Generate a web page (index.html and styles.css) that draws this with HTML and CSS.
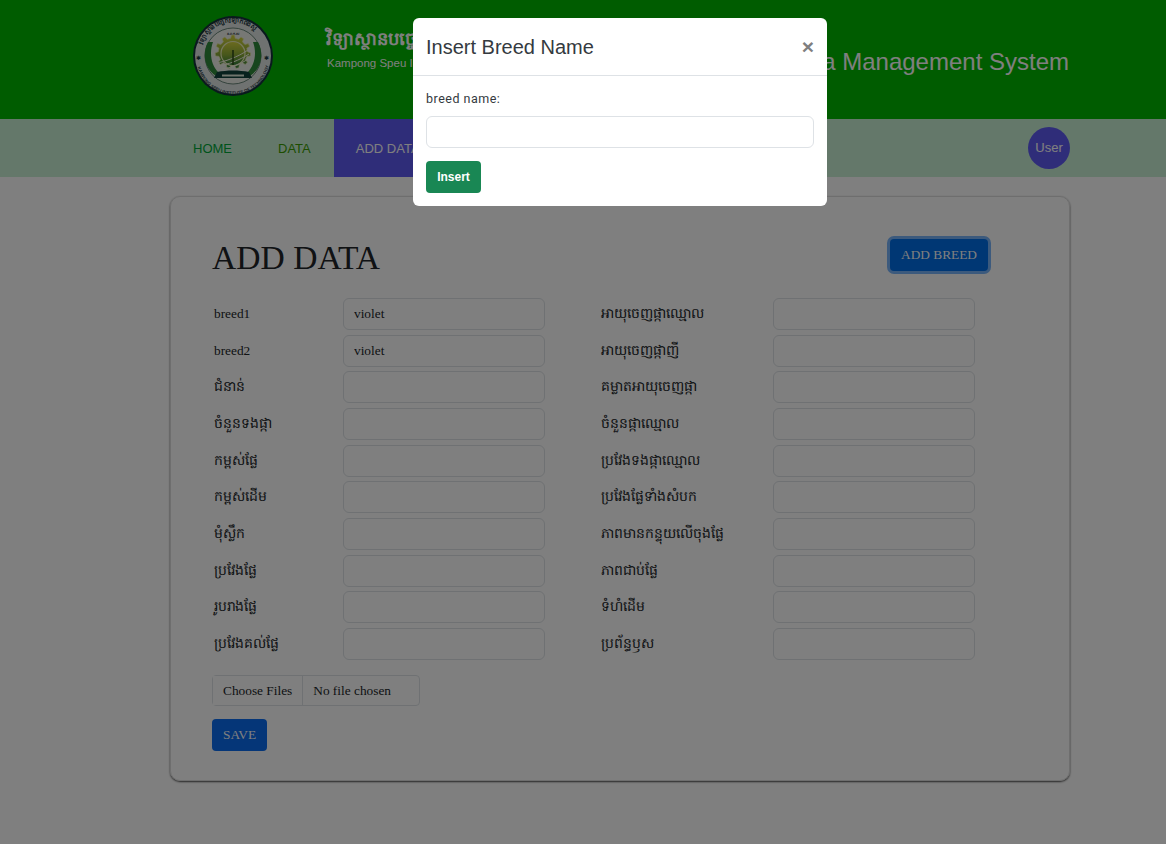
FILE: index.html
```html
<!DOCTYPE html>
<html lang="en">
<head>
<meta charset="utf-8">
<title>Add Data</title>
<link rel="stylesheet" href="styles.css">
</head>
<body>
<header class="brand">
  <div class="wrap brand-row">
    <svg class="logo" viewBox="0 0 80 80" width="80" height="80">
      <defs>
        <linearGradient id="disc" x1="0" y1="0" x2="0" y2="1"><stop offset="0" stop-color="#d8d63e"/><stop offset=".55" stop-color="#8fae38"/><stop offset="1" stop-color="#2f7d3a"/></linearGradient>
        <path id="ringTop" d="M8.500 44a32 32 0 1 1 63 0"/>
        <path id="ringBot" d="M3.500 42a36.500 36.500 0 0 0 73 0"/>
      </defs>
      <circle cx="40" cy="40" r="40" fill="#14323c"/>
      <circle cx="40" cy="40" r="38" fill="#dfe4e2"/>
      <circle cx="40" cy="40" r="28" fill="#eef1ea" stroke="#355c4c" stroke-width=".7"/>
      <text class="ring-km"><textPath href="#ringTop" startOffset="14%">វិទ្យាស្ថានបច្ចេកវិទ្យាកំពង់ស្ពឺ</textPath></text>
      <text class="ring-en"><textPath href="#ringBot" startOffset="8%">KAMPONG SPEU INSTITUTE OF TECHNOLOGY</textPath></text>
      <text class="ring-star" x="3" y="44">✱</text>
      <text class="ring-star" x="71" y="44">✱</text>
      <text class="ring-mark" x="40" y="18.500">ន.ព.ក.ស</text>
      <path d="M15 26c-6 11-4 26 8 34l3-3c-8-8-10-20-6-31zM65 26c6 11 4 26-8 34l-3-3c8-8 10-20 6-31z" fill="#2f8a3b"/>
      <path d="M38.500 19h3l.7 3.300 3.300 1 2.500-2.200 2.500 1.600-1 3.300 2.500 2.400 3.300-.8 1.300 2.700-2.800 2 .7 3.400 3.200 1.200-.4 3-3.400.4-1.500 3.200 2 2.800-2.200 2.100-2.900-1.800-3 1.800-.4 3.400-3 .5-1.300-3.200h-3.400l-1.300 3.200-3-.5-.4-3.400-3-1.800-2.900 1.800-2.200-2.100 2-2.800-1.500-3.200-3.400-.4-.4-3 3.200-1.200.7-3.400-2.800-2 1.300-2.700 3.300.8 2.500-2.400-1-3.300 2.500-1.600 2.500 2.200 3.300-1z" fill="url(#disc)" stroke="#e8eab0" stroke-width=".7"/>
      <circle cx="40" cy="37.500" r="12" fill="url(#disc)" stroke="#eef0c0" stroke-width="1.200"/>
      <path d="M23 47c8-1 22-6 32-13M25 50c9-1 22-6 31-12M29 53c8-1 19-5 26-10" stroke="#f7f8e6" stroke-width="1" fill="none"/>
      <path d="M40 34v15" stroke="#2c4a16" stroke-width="1.500"/>
      <path d="M24 56c10-2 22-2 32 0l3 6H21z" fill="#10423c"/>
      <path d="M29 58.500h22v2H29z" fill="#dfe8d8"/>
    </svg>
    <div class="brand-text">
      <div class="brand-km">វិទ្យាស្ថានបច្ចេកវិទ្យាកំពង់ស្ពឺ</div>
      <div class="brand-en">Kampong Speu Institute of Technology</div>
    </div>
    <div class="brand-title">Data Management System</div>
  </div>
</header>

<nav class="nav">
  <div class="wrap nav-row">
    <a class="nav-item nav-home" href="#">HOME</a>
    <a class="nav-item nav-data" href="#">DATA</a>
    <a class="nav-item nav-active" href="#">ADD DATA</a>
    <span class="user">User</span>
  </div>
</nav>

<main class="wrap">
  <section class="card">
    <div class="card-head">
      <h1 class="card-title">ADD DATA</h1>
      <button class="btn btn-focus" type="button">ADD BREED</button>
    </div>
    <form class="fields">
      <div class="col">
        <div class="row"><label class="lbl lbl-en">breed1</label><input class="field" value="violet"></div>
        <div class="row"><label class="lbl lbl-en">breed2</label><input class="field" value="violet"></div>
        <div class="row"><label class="lbl">ជំនាន់</label><input class="field"></div>
        <div class="row"><label class="lbl">ចំនួនទងផ្កា</label><input class="field"></div>
        <div class="row"><label class="lbl">កម្ពស់ផ្លែ</label><input class="field"></div>
        <div class="row"><label class="lbl">កម្ពស់ដើម</label><input class="field"></div>
        <div class="row"><label class="lbl">មុំស្លឹក</label><input class="field"></div>
        <div class="row"><label class="lbl">ប្រវែងផ្លែ</label><input class="field"></div>
        <div class="row"><label class="lbl">រូបរាងផ្លែ</label><input class="field"></div>
        <div class="row"><label class="lbl">ប្រវែងគល់ផ្លែ</label><input class="field"></div>
      </div>
      <div class="col col-right">
        <div class="row"><label class="lbl">អាយុចេញផ្កាឈ្មោល</label><input class="field"></div>
        <div class="row"><label class="lbl">អាយុចេញផ្កាញី</label><input class="field"></div>
        <div class="row"><label class="lbl">គម្លាតអាយុចេញផ្កា</label><input class="field"></div>
        <div class="row"><label class="lbl">ចំនួនផ្កាឈ្មោល</label><input class="field"></div>
        <div class="row"><label class="lbl">ប្រវែងទងផ្កាឈ្មោល</label><input class="field"></div>
        <div class="row"><label class="lbl">ប្រវែងផ្លែទាំងសំបក</label><input class="field"></div>
        <div class="row"><label class="lbl">ភាពមានកន្ទុយលើចុងផ្លែ</label><input class="field"></div>
        <div class="row"><label class="lbl">ភាពជាប់ផ្លែ</label><input class="field"></div>
        <div class="row"><label class="lbl">ទំហំដើម</label><input class="field"></div>
        <div class="row"><label class="lbl">ប្រព័ន្ធឫស</label><input class="field"></div>
      </div>
    </form>
    <div class="file"><span class="file-btn">Choose Files</span><span class="file-name">No file chosen</span></div>
    <button class="btn btn-save" type="button">SAVE</button>
  </section>
</main>

<div class="backdrop">
  <div class="modal">
    <div class="modal-head">
      <h2 class="modal-title">Insert Breed Name</h2>
      <span class="modal-close">×</span>
    </div>
    <div class="modal-body">
      <label class="modal-label">breed name:</label>
      <input class="modal-input">
      <button class="btn-insert" type="button">Insert</button>
    </div>
  </div>
</div>
</body>
</html>
```
FILE: styles.css
```css
* { box-sizing: border-box; }
html, body { margin: 0; height: 100%; }
body {
  background: #fff;
  color: #212529;
  font-family: "Liberation Serif", serif;
  overflow: hidden;
}
.wrap { width: 900px; margin-left: 170px; }
.brand { height: 119px; background: #00b800; }
.brand-row { height: 119px; display: flex; align-items: flex-start; padding: 16px 1px 0 23px; }
.logo { flex: none; display: block; }
.ring-km { font: 700 6.500px "Liberation Sans", sans-serif; fill: #1f3a44; }
.ring-en { font: 700 4.300px "Liberation Sans", sans-serif; fill: #1f3a44; }
.ring-star { font: 6px "DejaVu Sans", sans-serif; fill: #1f3a44; }
.ring-mark { font: 700 3.500px "Liberation Sans", sans-serif; fill: #1f3a44; text-anchor: middle; }
.brand-text { margin-left: 53px; padding-top: 10px; color: #fff; font-family: "Liberation Sans", sans-serif; }
.brand-km { font-size: 18px; font-weight: 700; line-height: 27px; white-space: nowrap; }
.brand-en { font-size: 11.500px; line-height: 14px; margin: 3px 0 0 1px; white-space: nowrap; }
.brand-title { margin-left: auto; padding-top: 31px; color: #fff; font: 24px/30px "Liberation Sans", sans-serif; }

.nav { height: 58px; background: #c8f0d4; }
.nav-row { height: 58px; display: flex; align-items: stretch; }
.nav-item { padding: 0 23px; font: 13px/59px "Liberation Sans", sans-serif; text-decoration: none; white-space: nowrap; }
.nav-home { color: #00a838; }
.nav-data { color: #3a9c00; }
.nav-active { background: #5f5bf2; color: #fff; padding: 0 22px; }
.user {
  margin: 8px 0 0 auto; width: 42px; height: 42px; border-radius: 50%;
  background: #5f5bf2; color: #fff; text-align: center;
  font: 13px/42px "Liberation Sans", sans-serif;
}

.card {
  margin-top: 19px; height: 585px; padding: 42px 42px 0 41px;
  border: 1px solid #dcdcdc; border-radius: 10px;
  box-shadow: 0 1px 2px rgba(0, 0, 0, .7);
}
.card-head { display: flex; justify-content: space-between; align-items: flex-start; height: 59px; padding-right: 39px; }
.card-title { margin: 0; font-size: 33.600px; font-weight: 400; line-height: 38px; }
.btn { border: 0; border-radius: 4px; color: #fff; background: #0a6cf0; font: 13.330px/32px "Liberation Serif", serif; padding: 0 11px; height: 32px; }
.btn-focus { background: #006ee8; box-shadow: 0 0 0 3px #78b4fa; }
.fields { display: grid; grid-template-columns: 389px 1fr; }
.row { height: 36.670px; display: flex; align-items: flex-start; }
.lbl { width: 131px; padding-left: 2px; font-size: 14px; line-height: 32px; flex: none; white-space: nowrap; }
.col-right .lbl { width: 172px; padding-left: 0; }
.lbl-en { font-size: 13.330px; line-height: 32px; }
.field {
  width: 202px; height: 32px; padding: 0 10px; flex: none;
  border: 1px solid #dee2e6; border-radius: 6px; background: #fff;
  font: 13.330px "Liberation Serif", serif; color: #212529;
}
.file {
  margin-top: 10px; width: 208px; height: 31px; display: flex; align-items: center;
  border: 1px solid #dee2e6; border-radius: 4px;
  font-size: 13.330px;
}
.file-btn { padding: 0 10px; line-height: 29px; border-right: 1px solid #dee2e6; background: #fff; }
.file-name { padding-left: 10px; line-height: 29px; }
.btn-save { display: block; margin-top: 13px; }

.backdrop { position: fixed; inset: 0; background: rgba(0, 0, 0, .5); }
.modal {
  position: absolute; left: 413px; top: 18px; width: 414px; height: 188px;
  background: #fff; border-radius: 6px; font-family: "Liberation Sans", sans-serif;
}
.modal-head { height: 58px; display: flex; align-items: center; justify-content: space-between; padding: 2px 13px 0; border-bottom: 1px solid #dee2e6; }
.modal-title { margin: 0; font-size: 20px; font-weight: 400; color: #343a40; }
.modal-close { font-size: 21px; font-weight: 700; color: #7f7f7f; line-height: 1; margin-top: -2px; }
.modal-body { padding: 15px 13px; }
.modal-label { display: block; font: 12.500px/16px "Roboto", sans-serif; letter-spacing: .5px; color: #343a40; }
.modal-input { display: block; margin-top: 9px; width: 388px; height: 32px; border: 1px solid #dee2e6; border-radius: 6px; background: #fff; }
.btn-insert { display: block; margin-top: 13px; width: 55px; height: 32px; border: 0; border-radius: 4px; background: #198754; color: #fff; font: 700 12px/32px "Liberation Sans", sans-serif; padding: 0; }
```
